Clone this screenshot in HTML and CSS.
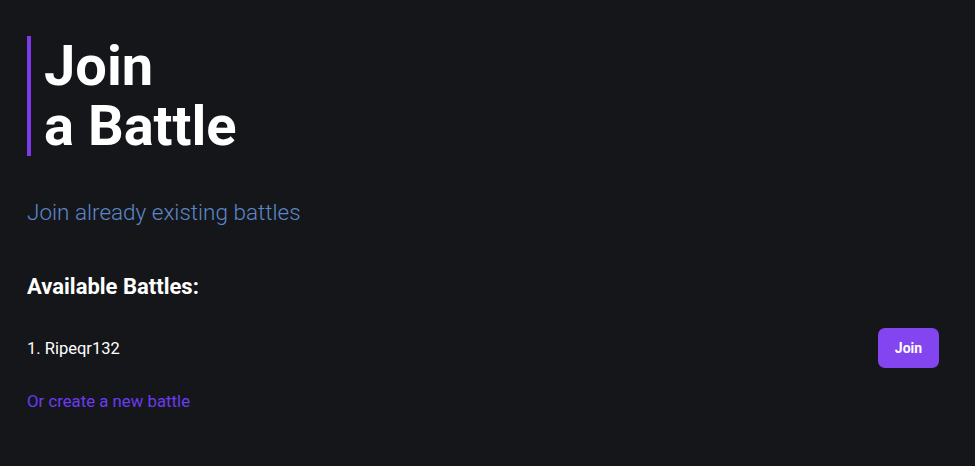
FILE: index.html
```html
<!DOCTYPE html>
<html>
<head>
<meta charset="utf-8">
<link rel="stylesheet" href="styles.css">
</head>
<body>
<main class="page">
  <h1 class="title"><span class="title-line">Join</span><span class="title-line">a Battle</span></h1>
  <p class="subtitle">Join already existing battles</p>
  <h2 class="section">Available Battles:</h2>
  <div class="battle-row">
    <span class="battle-name">1. Ripeqr132</span>
    <button class="join-btn">Join</button>
  </div>
  <a class="create-link" href="#">Or create a new battle</a>
</main>
</body>
</html>
```
FILE: styles.css
```css
html, body {
  margin: 0;
  padding: 0;
  background: #15161a;
  height: 100%;
}
body {
  font-family: Roboto, "Liberation Sans", sans-serif;
  color: #ffffff;
}
.page {
  padding: 36px 36px 0 27px;
  display: flex;
  flex-direction: column;
}
.title {
  margin: 0;
  border-left: 4px solid #7c3aed;
  padding-left: 13px;
  font-size: 56px;
  line-height: 60px;
  font-weight: 700;
  color: #ffffff;
  display: flex;
  flex-direction: column;
}
.title-line {
  display: block;
  height: 60px;
}
.subtitle {
  margin: 42px 0 0 0;
  font-size: 22.5px;
  line-height: 28px;
  color: #5c87c8;
  font-weight: 300;
}
.section {
  margin: 47px 0 0 0;
  font-size: 22px;
  line-height: 28px;
  font-weight: 700;
}
.battle-row {
  margin-top: 27px;
  display: flex;
  align-items: center;
  justify-content: space-between;
}
.battle-name {
  font-size: 16.5px;
  font-weight: 400;
}
.join-btn {
  background: #8245f0;
  border: none;
  color: #fff;
  border-radius: 7px;
  width: 61px;
  height: 40px;
  font-family: inherit;
  font-weight: 700;
  font-size: 14px;
}
.create-link {
  margin-top: 23px;
  align-self: flex-start;
  color: #6a3cf0;
  text-decoration: none;
  font-size: 16.8px;
}
```
